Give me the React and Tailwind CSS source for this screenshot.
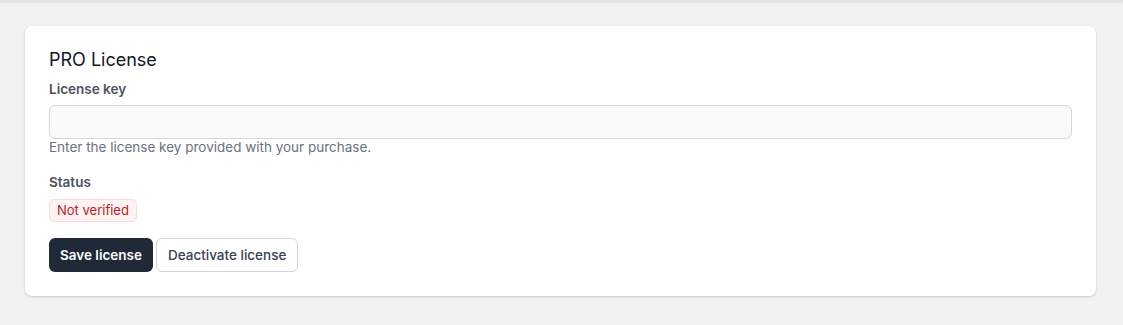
export default function App() {
  return (
    <div className="min-h-[325px] w-full bg-[#f2f2f2] text-[13.5px]" style={{ fontFamily: 'Inter, "Noto Sans", sans-serif' }}>
      <div className="h-[2px] w-full bg-[#e2e2e2] shadow-[0_1px_2px_rgba(0,0,0,0.06)]" />
      <div className="pl-[25px] pr-[27px] pt-[24px]">
        <div className="rounded-[7px] bg-white px-6 pt-5 pb-6 shadow-[0_1px_3px_rgba(0,0,0,0.12),0_1px_2px_rgba(0,0,0,0.06)]">
          <h2 className="text-[18px] leading-7 font-normal text-[#111827]">PRO License</h2>
          <label className="mt-[5px] block leading-5 font-semibold text-[#4b5160]">License key</label>
          <input
            type="text"
            className="mt-[6px] block h-[34px] w-full rounded-md border border-[#d4d4dc] bg-[#fafafa] px-3 outline-none"
          />
          <p className="leading-4 text-[#6b7280]">Enter the license key provided with your purchase.</p>
          <div className="mt-[17px] leading-5 font-semibold text-[#4b5160]">Status</div>
          <div className="mt-[7px]">
            <span className="inline-flex h-[23px] items-center rounded-[5px] border border-[#fcdada] bg-[#fef2f2] px-[7px] text-[13px] text-[#b91c1c]">
              Not verified
            </span>
          </div>
          <div className="mt-[16px] flex gap-[3px]">
            <button className="h-[34px] rounded-md bg-[#1f2937] px-[11px] text-[13.5px] font-semibold text-white">
              Save license
            </button>
            <button className="h-[34px] rounded-md border border-[#d4d4dc] bg-white px-[11px] text-[13.5px] font-medium text-[#374151]">
              Deactivate license
            </button>
          </div>
        </div>
      </div>
    </div>
  );
}
